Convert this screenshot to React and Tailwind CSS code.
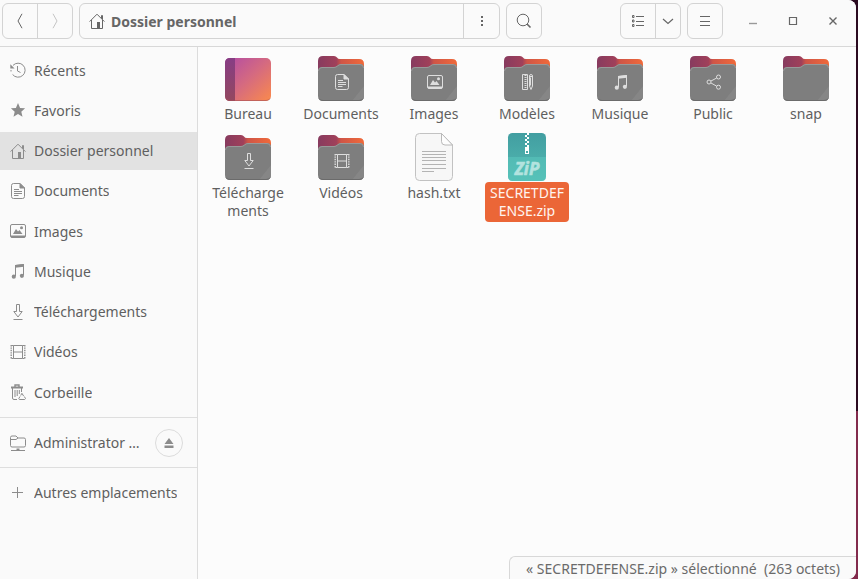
import React from "react";

function Glyph({ name, className = "size-4" }) {
  return (
    <svg viewBox="0 0 16 16" className={className} fill="none" stroke="currentColor" aria-hidden="true">
      {glyphs[name]}
    </svg>
  );
}

const glyphs = {
  recent: (
    <>
      <path d="M3 3.400A7 7 0 1 1 2.600 12.500M1 9.500V8" />
      <path d="M.3 2.200v4.300h4.300z" fill="currentColor" stroke="none" />
      <path d="M7.500 4v5l3 1.500" />
    </>
  ),
  star: (
    <path
      d="M8 1l2.1 4.9 5 .4-3.8 3.4 1.2 5.1L8 12.1l-4.5 2.7 1.2-5.1L.9 6.3l5-.4z"
      fill="currentColor"
      stroke="none"
    />
  ),
  home: (
    <>
      <path d="M.6 8.6L8 1.2l7.4 7.4M2.5 7v8.5h11V7M12.5 5.5v-3h1v4" />
      <path d="M8 9h3v6H8z" fill="currentColor" stroke="none" />
    </>
  ),
  document: (
    <>
      <path d="M3.5.5H10l4.500 4.500v8.500a2 2 0 0 1-2 2h-9a2 2 0 0 1-2-2v-11a2 2 0 0 1 2-2z" />
      <path d="M10 .5V5h4.500z" fill="currentColor" />
      <path d="M4 6.500h5M4 8.500h8M4 10.500h8M4 12.500h4.500" />
    </>
  ),
  image: (
    <>
      <rect x=".5" y="1.500" width="15" height="13" rx="1.500" />
      <path d="M1 12.500h14V14.500H1zM3 11l3-5 2 2.500L9.500 7l3 4z" fill="currentColor" stroke="none" />
      <circle cx="11.500" cy="4.800" r="1.500" fill="currentColor" stroke="none" />
    </>
  ),
  music: (
    <>
      <path d="M5.500 13V2.500l8-1V12" />
      <path d="M5 2l9-1v2.800L5 4.800z" fill="currentColor" stroke="none" />
      <circle cx="3.800" cy="13.700" r="2.100" fill="currentColor" stroke="none" />
      <circle cx="11.900" cy="12.800" r="2.100" fill="currentColor" stroke="none" />
    </>
  ),
  download: <path d="M6.500.5h3v7h2.700L8 13 3.800 7.500h2.700zM3.500 15.500h9" />,
  video: (
    <>
      <path d="M3.500 1.500h9v13h-9zM3.500 8h9" />
      <path d="M3.500 1.500h-2M3.500 14.500h-2M12.500 1.500h2M12.500 14.500h2" />
      <path d="M1.200 1v14M14.800 1v14" strokeWidth="1.400" strokeDasharray="1.400 1" />
    </>
  ),
  trash: (
    <>
      <path d="M1 3.500h12" strokeWidth="2" />
      <path d="M5 3V1h4v2" strokeWidth="1.400" />
      <path d="M2.500 4v10q0 1.500 1.500 1.500h3M11.500 4v4M5 6v7M7.200 6v6M9.300 6v4" />
      <path d="M10.700 11.500l1.200-2.200 1.700 2.700M10 12.500l-1.200 2 .6 1h5.300l.8-1-1.200-2" />
    </>
  ),
  remote: (
    <>
      <path d="M.5 10.500v-8q0-1.500 1.500-1.500h4l2 2h6q1.500 0 1.500 1.500v6q0 1.500-1.500 1.500H2q-1.500 0-1.500-1.500zM.5 4.500H6L8 3" />
      <path d="M1 15.500h14" />
      <path d="M6.500 13.500h3V16h-3z" fill="currentColor" stroke="none" />
    </>
  ),
  plus: <path d="M7.500 2v11M2 7.500h11" />,
  eject: <path d="M8 3l4.500 6h-9zM3.500 10.500h9V13h-9z" fill="currentColor" stroke="none" />,
  template: (
    <>
      <path d="M2.500.5h5v15h-5z" />
      <path d="M5.500 1v14" strokeWidth="2" strokeDasharray="1 1" />
      <path d="M9.500 2q0-1.500 1.500-1.500t1.500 1.500v10L11 15.500 9.500 12z" />
      <path d="M10.500 3.500v8M9 2.500h4" />
    </>
  ),
  share: (
    <>
      <circle cx="3" cy="8" r="2" />
      <circle cx="12.500" cy="3" r="2" />
      <circle cx="12.500" cy="13.200" r="2" />
      <path d="M5 7l5.700-3M5 9l5.700 3.200" />
    </>
  ),
  back: <path d="M10 .800L6 8l4 7.200" />,
  forward: <path d="M6 .800L10 8l-4 7.200" />,
  dots: <path d="M7 3h2v2H7zM7 7h2v2H7zM7 11h2v2H7z" fill="currentColor" stroke="none" />,
  search: (
    <>
      <circle cx="7" cy="7" r="5.800" />
      <path d="M11 11l3.500 3.500" strokeWidth="1.600" />
    </>
  ),
  list: (
    <>
      <path d="M6 3.500h8M6 8.500h8M6 12.500h8" />
      <path d="M2.500 2.500h1.500v2H2.500zM2.500 7h1.500v2H2.500zM2.500 11.500h1.500v2H2.500z" />
    </>
  ),
  chevron: <path d="M3 6l5 4.500L13 6" strokeWidth="1.200" />,
  menu: <path d="M3 3.500h10M3 8.500h10M3 12.500h10" />,
  minimize: <path d="M4 10.500h8" strokeWidth="1.400" />,
  maximize: <path d="M4.500 4.500h7v7h-7z" strokeWidth="1.200" />,
  close: <path d="M4.500 4.500l7 7M11.500 4.500l-7 7" strokeWidth="1.400" />,
};

function Gradients() {
  return (
    <svg className="absolute size-0" aria-hidden="true">
      <defs>
        <linearGradient id="tab" x1="0" x2="1">
          <stop offset="0" stopColor="#873b5f" />
          <stop offset=".4" stopColor="#a0405a" />
          <stop offset=".5" stopColor="#cf5547" />
          <stop offset="1" stopColor="#f06a3a" />
        </linearGradient>
        <linearGradient id="desk" x1="0" y1="0" x2="1" y2="1">
          <stop offset="0" stopColor="#b14ba6" />
          <stop offset=".5" stopColor="#d56a80" />
          <stop offset="1" stopColor="#fa8a4c" />
        </linearGradient>
        <linearGradient id="spine" x1="0" y1="0" x2="0" y2="1">
          <stop offset="0" stopColor="#873d85" />
          <stop offset="1" stopColor="#93485f" />
        </linearGradient>
        <linearGradient id="zip" x1="0" y1="0" x2="0" y2="1">
          <stop offset="0" stopColor="#429ea1" />
          <stop offset="1" stopColor="#52bab2" />
        </linearGradient>
      </defs>
    </svg>
  );
}

function FolderIcon({ glyph }) {
  return (
    <span className="grid size-12 place-items-center">
      <svg viewBox="0 0 48 48" className="col-start-1 row-start-1 size-12" aria-hidden="true">
        <path d="M1 7q0-5 5-5h11q2 0 3 1.500T23 5h19q5 0 5 5v10H1z" fill="url(#tab)" />
        <path d="M1 17q0-4 4-4h12q2 0 3.500-1.500T24 10h19q4 0 4 4v28q0 5-5 5H6q-5 0-5-5z" fill="#7e7e7e" />
        <path d="M47 32v10q0 5-5 5H35z" fill="#868686" />
        <path d="M1.500 17q0-3.500 3.500-3.500h12q2 0 3.500-1.500t3.500-1.500h19q3.500 0 3.500 3.500" fill="none" stroke="#999" />
        <path d="M2 44.500q1 2 4 2h36q3 0 4-2" fill="none" stroke="#6b6b6b" />
      </svg>
      {glyph && (
        <span className="col-start-1 row-start-1 pt-2 pl-px text-[#dedede]">
          <Glyph name={glyph} />
        </span>
      )}
    </span>
  );
}

function DesktopIcon() {
  return (
    <svg viewBox="0 0 48 48" className="size-12" aria-hidden="true">
      <rect x="1" y="4" width="46" height="43" rx="5" fill="url(#desk)" />
      <path d="M11 4H6Q1 4 1 9v33q0 5 5 5h5z" fill="url(#spine)" />
      <path d="M2 44.500q1 2 4 2h36q3 0 4-2" fill="none" stroke="#a65058" opacity=".6" />
    </svg>
  );
}

function TextIcon() {
  return (
    <svg viewBox="0 0 48 48" className="size-12" aria-hidden="true">
      <path
        d="M9.500.500H31.500l11 11.500v31.500q0 4-4 4h-29q-4 0-4-4v-39q0-4 4-4z"
        fill="#f7f7f7"
        stroke="#c2c2c2"
      />
      <path d="M31.500.500v8q0 3.500 3.500 3.500h7.500z" fill="#fdfdfd" stroke="#b8b8b8" />
      <path
        d="M12 18.500h24M12 21.500h24M12 24.500h24M12 27.500h24M12 31.500h24M12 35.500h24M12 38.500h12"
        stroke="#b4b4b4"
      />
    </svg>
  );
}

function ZipIcon() {
  return (
    <svg viewBox="0 0 48 48" className="size-12" aria-hidden="true">
      <rect x="5" y="0" width="38" height="48" rx="4.500" fill="url(#zip)" />
      <path d="M5 24h38v20q0 4-4 4H9q-4 0-4-4z" fill="#5ccabf" opacity=".5" />
      <path
        d="M24 0h2v2h-2zM22 2h2v2h-2zM24 4h2v2h-2zM22 6h2v2h-2zM24 8h2v2h-2zM22 10h2v2h-2zM24 12h2v2h-2zM22 14h4v7h-4zM23 18v2h2v-2z"
        fill="#fff"
        fillRule="evenodd"
      />
      <text
        x="24"
        y="42"
        textAnchor="middle"
        fill="#b3e3df"
        stroke="#b3e3df"
        strokeWidth=".6"
        fontSize="17"
        fontWeight="700"
        fontStyle="italic"
        fontFamily="Open Sans, Noto Sans, sans-serif"
      >
        ZiP
      </text>
    </svg>
  );
}

const places = [
  ["Récents", "recent"],
  ["Favoris", "star"],
  ["Dossier personnel", "home"],
  ["Documents", "document"],
  ["Images", "image"],
  ["Musique", "music"],
  ["Téléchargements", "download"],
  ["Vidéos", "video"],
  ["Corbeille", "trash"],
];

const files = [
  { lines: ["Bureau"], icon: <DesktopIcon /> },
  { lines: ["Documents"], icon: <FolderIcon glyph="document" /> },
  { lines: ["Images"], icon: <FolderIcon glyph="image" /> },
  { lines: ["Modèles"], icon: <FolderIcon glyph="template" /> },
  { lines: ["Musique"], icon: <FolderIcon glyph="music" /> },
  { lines: ["Public"], icon: <FolderIcon glyph="share" /> },
  { lines: ["snap"], icon: <FolderIcon /> },
  { lines: ["Télécharge", "ments"], icon: <FolderIcon glyph="download" /> },
  { lines: ["Vidéos"], icon: <FolderIcon glyph="video" /> },
  { lines: ["hash.txt"], icon: <TextIcon /> },
  { lines: ["SECRETDEF", "ENSE.zip"], icon: <ZipIcon />, selected: true },
];

function HeaderButton({ label, glyph, className }) {
  return (
    <button type="button" aria-label={label} className={`flex shrink-0 items-center justify-center ${className}`}>
      <Glyph name={glyph} />
    </button>
  );
}

const group = "flex h-9 rounded-md border border-[#d3d3d3] divide-x divide-[#d3d3d3]";

function Header() {
  return (
    <header className="flex h-[47px] items-start border-b border-[#d8d8d8] bg-[#fafafa] px-[3px] pt-[3px] text-[#666]">
      <div className={`${group} -ml-px w-[71px] shrink-0`}>
        <HeaderButton label="Précédent" glyph="back" className="flex-1" />
        <HeaderButton label="Suivant" glyph="forward" className="flex-1 text-[#c4c4c4]" />
      </div>
      <div className={`${group} ml-1.5 w-[421px] min-w-0`}>
        <button type="button" className="flex min-w-0 flex-1 items-center gap-1.5 pl-[9px] font-bold">
          <Glyph name="home" className="size-4 shrink-0" />
          <span className="truncate">Dossier personnel</span>
        </button>
        <HeaderButton label="Options du dossier" glyph="dots" className="w-[35px]" />
      </div>
      <div className={`${group} ml-1.5 w-9 shrink-0`}>
        <HeaderButton label="Rechercher" glyph="search" className="flex-1" />
      </div>
      <div className={`${group} ml-auto w-[61px] shrink-0`}>
        <HeaderButton label="Affichage en liste" glyph="list" className="w-[35px]" />
        <HeaderButton label="Options d’affichage" glyph="chevron" className="flex-1" />
      </div>
      <div className={`${group} mx-1.5 w-9 shrink-0`}>
        <HeaderButton label="Menu" glyph="menu" className="flex-1" />
      </div>
      <div className="ml-1 flex h-9 shrink-0">
        <HeaderButton label="Réduire" glyph="minimize" className="w-10 text-[#999]" />
        <HeaderButton label="Agrandir" glyph="maximize" className="w-10" />
        <HeaderButton label="Fermer" glyph="close" className="w-10" />
      </div>
    </header>
  );
}

function Place({ label, glyph, current }) {
  return (
    <a
      href="#"
      aria-current={current ? "page" : undefined}
      className={`flex h-[38px] min-w-0 flex-1 items-center gap-2 pl-2.5 ${current ? "bg-[#e2e2e2]" : ""}`}
    >
      <Glyph name={glyph} className="size-4 shrink-0 text-[#8c8c8c]" />
      <span className="truncate">{label}</span>
    </a>
  );
}

function Sidebar() {
  return (
    <nav className="w-[198px] shrink-0 border-r border-[#dcdcdc] bg-[#fafafa]">
      <ul className="flex h-[370px] flex-col justify-between pt-1 pb-1.5">
        {places.map(([label, glyph]) => (
          <li key={label} className="flex">
            <Place label={label} glyph={glyph} current={label === "Dossier personnel"} />
          </li>
        ))}
      </ul>
      <div className="flex h-[50px] items-center gap-1.5 border-t border-[#dedede] pr-3.5">
        <Place label="Administrator …" glyph="remote" />
        <button
          type="button"
          aria-label="Éjecter"
          className="flex size-7 shrink-0 items-center justify-center rounded-full border border-[#dcdcdc] text-[#8c8c8c]"
        >
          <Glyph name="eject" />
        </button>
      </div>
      <div className="flex h-[50px] items-center border-t border-[#dedede]">
        <Place label="Autres emplacements" glyph="plus" />
      </div>
    </nav>
  );
}

function File({ lines, icon, selected }) {
  return (
    <li className="flex justify-center">
      <button type="button" aria-pressed={!!selected} className="flex flex-col items-center gap-px">
        {icon}
        <span
          className={`w-[84px] rounded py-0.5 text-center leading-[18px] ${
            selected ? "bg-[#eb6637] text-[#fff4ef]" : ""
          }`}
        >
          {lines.map((line) => (
            <span key={line} className="block whitespace-nowrap">
              {line}
            </span>
          ))}
        </span>
      </button>
    </li>
  );
}

export default function App() {
  return (
    <div className="flex min-h-screen bg-[linear-gradient(#2b0a20_71%,#832b4d_71%)] pr-[2px] font-['Noto_Sans','Open_Sans',sans-serif] text-[14px] text-[#5f5f5f]">
      <Gradients />
      <div className="flex min-w-0 flex-1 flex-col overflow-hidden rounded-r-lg bg-[#fcfcfc]">
        <Header />
        <div className="flex flex-1">
          <Sidebar />
          <main className="flex min-w-0 flex-1 flex-col justify-between">
            <ul className="grid grid-cols-[repeat(auto-fill,93px)] justify-center gap-y-2 pt-[7px]">
              {files.map((file) => (
                <File key={file.lines[0]} {...file} />
              ))}
            </ul>
            <p className="flex h-[23px] items-center self-end whitespace-pre rounded-tl-md border-t border-l border-[#d8d8d8] bg-[#fafafa] pr-4 pl-4 text-[#6a6a6a]">
              « SECRETDEFENSE.zip » sélectionné  (263 octets)
            </p>
          </main>
        </div>
      </div>
    </div>
  );
}
